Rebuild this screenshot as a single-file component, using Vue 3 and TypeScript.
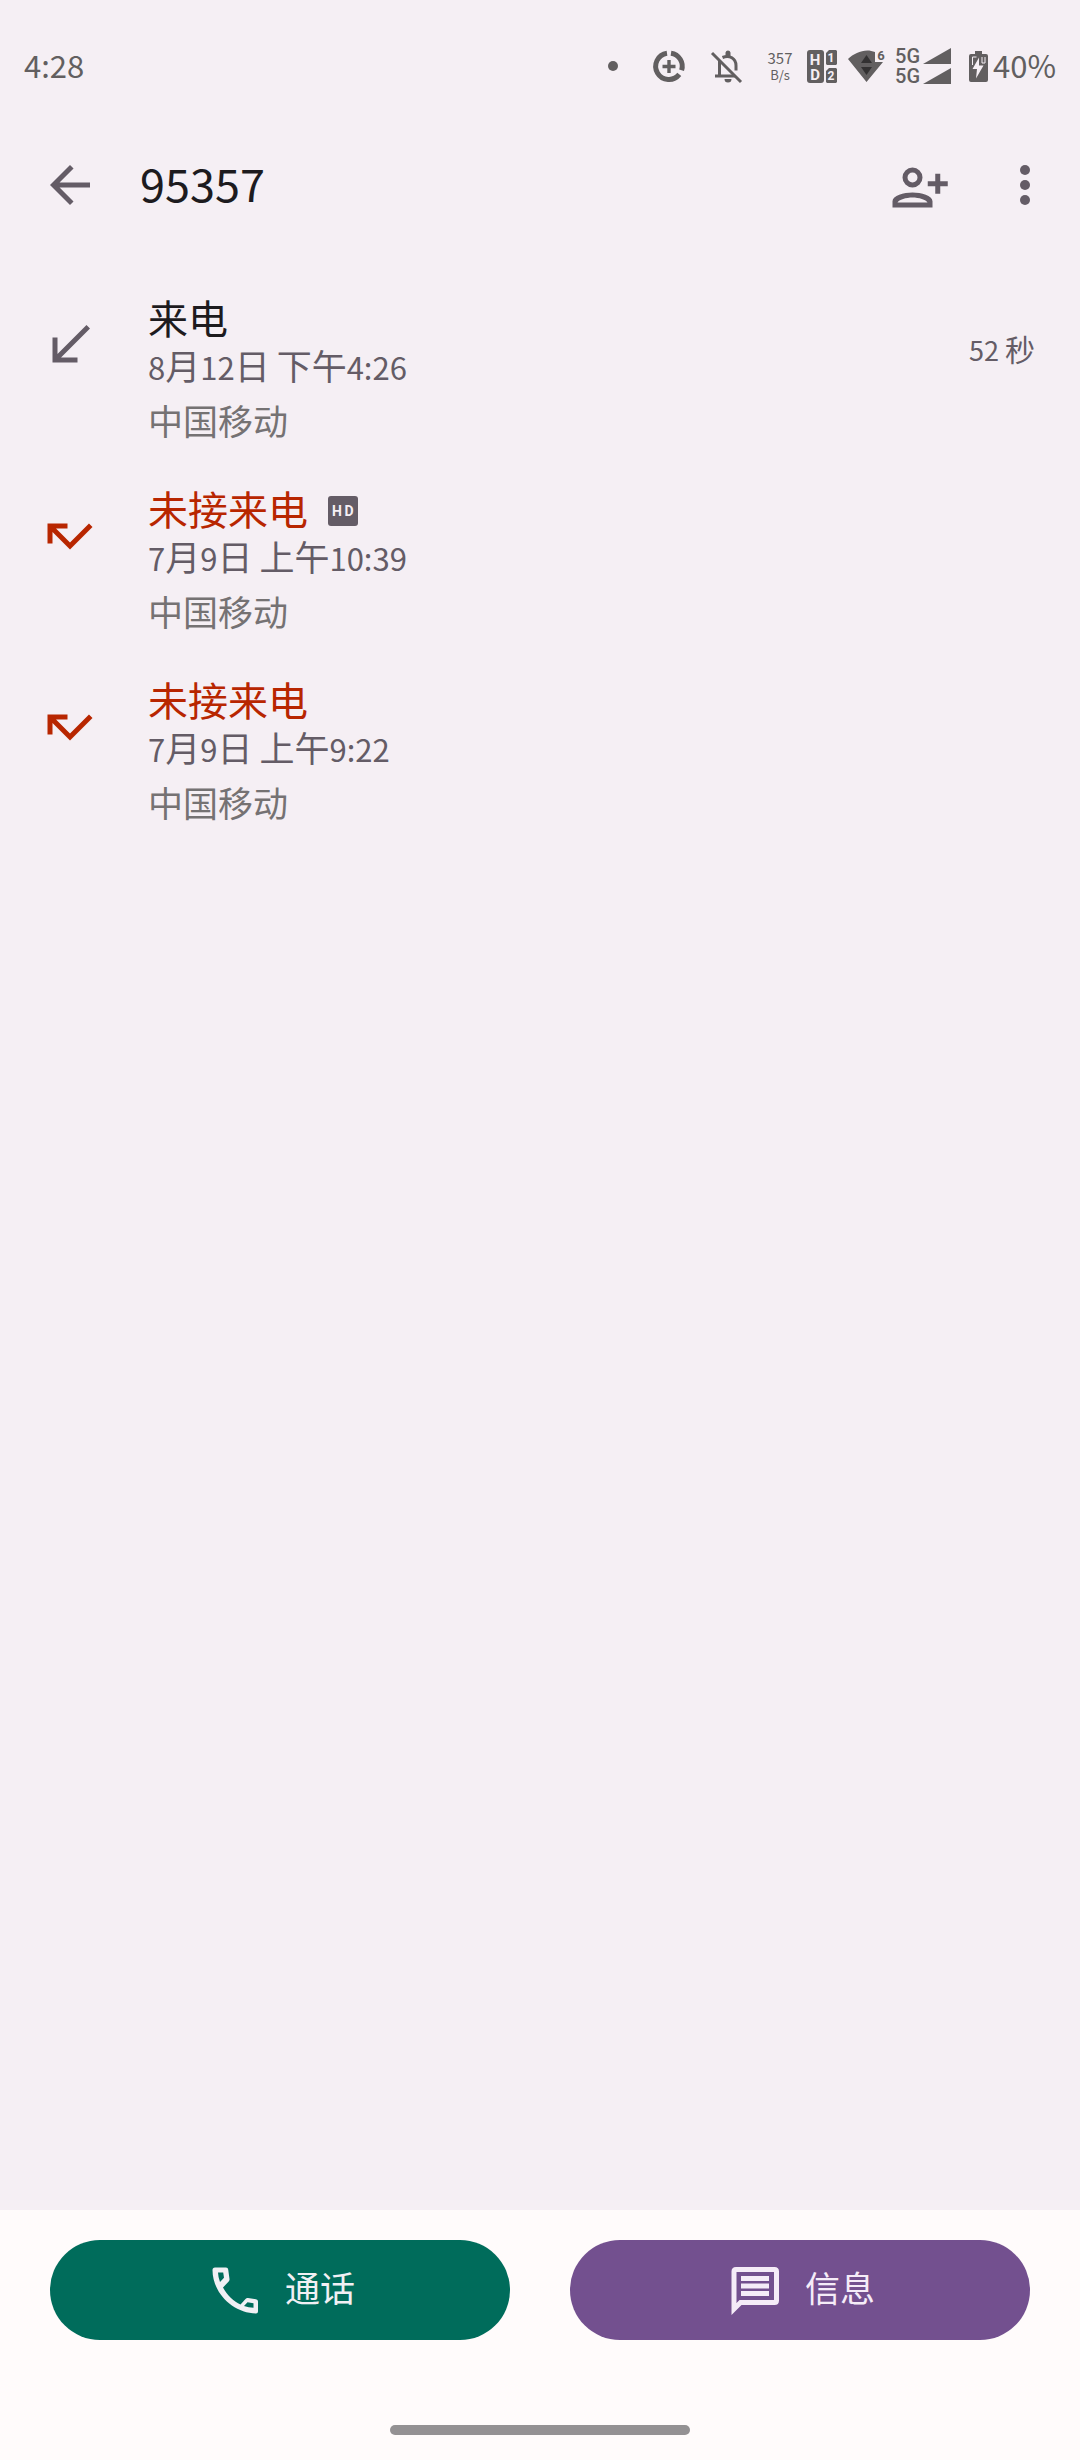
<script setup lang="ts">
interface CallEntry {
  id: number
  kind: 'incoming' | 'missed'
  label: string
  hd: boolean
  date: string
  carrier: string
  duration: string
}

interface Run {
  text: string
  latin: boolean
}

const contact = '95357'

const calls: CallEntry[] = [
  { id: 1, kind: 'incoming', label: '来电', hd: false, date: '8月12日 下午4:26', carrier: '中国移动', duration: '52 秒' },
  { id: 2, kind: 'missed', label: '未接来电', hd: true, date: '7月9日 上午10:39', carrier: '中国移动', duration: '' },
  { id: 3, kind: 'missed', label: '未接来电', hd: false, date: '7月9日 上午9:22', carrier: '中国移动', duration: '' },
]

// Digits are set slightly smaller than the Han characters around them.
function runs(text: string): Run[] {
  return (text.match(/[\x20-\x7e]+|[^\x20-\x7e]+/g) ?? []).map((part) => ({
    text: part,
    latin: /^[\x20-\x7e]/.test(part),
  }))
}
</script>

<template>
  <div class="screen">
    <div class="status">
      <span class="clock">4:28</span>
      <div class="notices">
        <svg width="36" height="36" viewBox="0 0 36 36"><circle cx="18" cy="18" r="5" fill="currentColor" /></svg>
        <svg width="36" height="36" viewBox="0 0 36 36" fill="none" stroke="currentColor">
          <path d="M20 5.2A13.2 13.2 0 0 1 30.6 22.3M28.3 26.4A13.2 13.2 0 1 1 16 5.2" stroke-width="5" />
          <path d="M18 12v13M11.5 18.5h13" stroke-width="3.4" />
        </svg>
        <svg width="36" height="36" viewBox="0 0 36 36" fill="none" stroke="currentColor" stroke-width="3">
          <path d="M5 5l29 29" />
          <path d="M12.5 13v15M8 28h20M15.5 9.5c7-3 13.5 1 13.5 8v5" />
          <path d="M18.5 4.5a2.6 2.6 0 0 1 5 0v4h-5zM17.5 31h7a3.5 3.5 0 0 1-7 0z" fill="currentColor" stroke="none" />
        </svg>
      </div>
      <div class="speed"><span>357</span><small>B/s</small></div>
      <div class="system">
        <svg width="30" height="36" viewBox="0 0 30 36">
          <rect x="0" y="2" width="17" height="33" rx="3" fill="currentColor" />
          <path d="M22 2h7l1 1v13l-1 1H20l-1-1V5zM22 20h7l1 1v13l-1 1H20l-1-1V23z" fill="currentColor" />
          <g class="glyph" fill="#f5eff4" text-anchor="middle">
            <text x="8" y="17" font-size="15">H</text><text x="8" y="32" font-size="15">D</text>
            <text x="24" y="14" font-size="12">1</text><text x="24" y="32" font-size="12">2</text>
          </g>
        </svg>
        <svg width="38" height="36" viewBox="0 0 38 36">
          <path d="M1 11C8 4 19 0 28 4v10h8L19.5 34z" fill="currentColor" />
          <path d="M14 15l5.5-8 5.5 8zM14 19h11l-5.5 8z" fill="#333132" />
          <text class="glyph" x="34" y="12" text-anchor="middle" font-size="13" fill="currentColor">6</text>
        </svg>
        <div class="sims">
          <div v-for="sim in 2" :key="sim" class="sim">
            <span>5G</span>
            <svg width="30" height="16" viewBox="0 0 30 16"><path d="M1 16L29 0v16z" fill="currentColor" /></svg>
          </div>
        </div>
        <div class="battery">
          <svg width="28" height="36" viewBox="0 0 28 36">
            <path d="M13 3h7v3h4a2 2 0 0 1 2 2v24a2 2 0 0 1-2 2H9a2 2 0 0 1-2-2V8a2 2 0 0 1 2-2h4z" fill="currentColor" />
            <path d="M17 9.500l-6.500 11.500h4.500l-1 9.500 7.500-13h-4.500z" fill="#f5eff4" />
            <path d="M10.500 17V9h4M20 9v6h3V9" fill="none" stroke="#f5eff4" stroke-width="1" />
          </svg>
          <span>40%</span>
        </div>
      </div>
    </div>

    <header class="bar">
      <button class="icon-button" type="button" aria-label="返回">
        <svg class="icon" viewBox="0 0 24 24"><path d="M20 11H7.830l5.590-5.590L12 4l-8 8 8 8 1.410-1.410L7.830 13H20z" /></svg>
      </button>
      <h1>{{ contact }}</h1>
      <div class="tools">
        <button class="icon-button" type="button" aria-label="添加联系人">
          <svg class="icon" viewBox="0 0 24 24">
            <path fill-rule="evenodd" d="M9 5a4 4 0 1 1 0 8 4 4 0 0 1 0-8zm0 2a2 2 0 1 0 0 4 2 2 0 0 0 0-4zM1 21v-2.500C1 16.200 5.500 15 9 15s8 1.200 8 3.500V21zm2-2h12c-.5-1.100-3.500-2-6-2s-5.500.9-6 2z" />
            <path d="M18.100 7.500h2v3h3v2h-3v3h-2v-3h-3v-2h3z" />
          </svg>
        </button>
        <button class="icon-button" type="button" aria-label="更多选项">
          <svg class="icon" viewBox="0 0 24 24"><circle cx="12" cy="6" r="2" /><circle cx="12" cy="12" r="2" /><circle cx="12" cy="18" r="2" /></svg>
        </button>
      </div>
    </header>

    <main>
      <ul class="calls">
        <li v-for="call in calls" :key="call.id" class="call" :class="call.kind">
          <svg class="icon" viewBox="0 0 24 24">
            <path v-if="call.kind === 'incoming'" d="M20 5.410L18.590 4 7 15.590V9H5v10h10v-2H8.410z" />
            <path v-else d="M19.590 7L12 14.590 6.410 9H11V7H3v8h2v-4.590l7 7 9-9z" />
          </svg>
          <div class="details">
            <div class="label">
              <span>{{ call.label }}</span>
              <svg v-if="call.hd" class="hd" viewBox="0 0 30 30">
                <rect width="30" height="30" rx="3" fill="#645c66" />
                <g class="glyph" text-anchor="middle" font-size="14" fill="#f5eff4">
                  <text x="9" y="20">H</text><text x="21" y="20">D</text>
                </g>
              </svg>
            </div>
            <div class="date"><span v-for="(run, i) in runs(call.date)" :key="i" :class="{ latin: run.latin }">{{ run.text }}</span></div>
            <div class="carrier">{{ call.carrier }}</div>
          </div>
          <div v-if="call.duration" class="duration"><span v-for="(run, i) in runs(call.duration)" :key="i" :class="{ latin: run.latin }">{{ run.text }}</span></div>
        </li>
      </ul>
    </main>

    <footer>
      <div class="actions">
        <button class="action dial" type="button">
          <svg class="icon" viewBox="0 0 60 60">
            <path fill-rule="evenodd" d="M10 7.500h11q2 0 2.200 2l1.300 9.500q.2 1.500-.8 2.500l-5.700 6c4.500 8.500 11 14 17.500 17l5-5.500q1-1.200 2.500-1l8 1.300q2 .2 2 2.200v10q0 2-2 2C28 53 7.500 33 7.500 10q0-2.500 2.500-2.500zM13 12.500q.2 5 2 9.500l4-4.300-.8-5.200zM39 46q4.500 1.500 9.500 1.700v-4.400l-6-1z" />
          </svg>
          <span>通话</span>
        </button>
        <button class="action message" type="button">
          <svg class="icon" viewBox="0 0 60 60">
            <path fill-rule="evenodd" d="M11 7h38.500q4.500 0 4.500 4.500v29q0 4.500-4.500 4.500h-33l-10 10V11.500Q6.500 7 11 7zm.5 5v31l3-3H49V12z" />
            <path d="M16 16h28v5H16zM16 23.500h28v5H16zM16 31h28v5H16z" />
          </svg>
          <span>信息</span>
        </button>
      </div>
      <div class="handle"></div>
    </footer>
  </div>
</template>

<style>
body {
  background: #f5eff4;
}
</style>

<style scoped>
.screen {
  display: flex;
  flex-direction: column;
  min-height: 100vh;
  background: #f5eff4;
  color: #645c66;
  font-family: "Liberation Sans", "Noto Sans CJK SC", sans-serif;
  font-size: 35px;
}
svg {
  display: block;
  flex: none;
}
.glyph {
  font-family: Roboto, sans-serif;
  font-weight: 700;
}
.status {
  display: flex;
  align-items: center;
  height: 132px;
  padding: 0 24px;
  color: #625f60;
  font-family: "Noto Sans CJK SC", sans-serif;
  font-size: 31px;
}
.clock {
  flex: 1;
}
.clock,
.battery span {
  padding-bottom: 3px;
}
.notices {
  display: flex;
  gap: 20px;
}
.speed {
  display: flex;
  flex-direction: column;
  align-items: center;
  width: 34px;
  margin: 0 10px 0 20px;
  font-size: 15px;
  line-height: 18px;
}
.speed small {
  font-size: 13px;
  line-height: 16px;
}
.system {
  display: flex;
  align-items: center;
  gap: 10px;
}
.sims {
  display: flex;
  flex-direction: column;
  gap: 4px;
}
.sim {
  display: flex;
  align-items: center;
  gap: 2px;
  font-family: Roboto, sans-serif;
  font-weight: 500;
  font-size: 20px;
  line-height: 16px;
}
.battery {
  display: flex;
  align-items: center;
  gap: 3px;
}
.bar {
  display: flex;
  align-items: center;
  gap: 40px;
  height: 106px;
  padding: 0 25px 0 40px;
}
h1 {
  flex: 1;
  margin: 0;
  padding-bottom: 4px;
  color: #1d1b1e;
  font-family: "Noto Sans CJK SC", sans-serif;
  font-size: 45px;
  font-weight: 400;
  line-height: 60px;
}
.tools {
  display: flex;
  gap: 45px;
}
button {
  border: 0;
  padding: 0;
  font: inherit;
  cursor: pointer;
}
.icon-button {
  background: none;
  color: #645c66;
}
.icon {
  width: 60px;
  height: 60px;
  fill: currentColor;
}
main {
  flex: 1;
}
.calls {
  margin: 0;
  padding: 38px 0 0;
  list-style: none;
}
.call {
  display: flex;
  align-items: flex-start;
  gap: 48px;
  padding: 20px 45px 15px 40px;
}
.call > .icon {
  margin-top: 19px;
}
.details {
  flex: 1;
}
.label {
  display: flex;
  align-items: center;
  gap: 20px;
  color: #1d1b1e;
  font-size: 40px;
  line-height: 48px;
}
.missed > .icon,
.missed .label {
  color: #b82600;
}
.hd {
  width: 30px;
  height: 30px;
}
.date {
  line-height: 48px;
  white-space: pre;
}
.latin {
  font-family: "Noto Sans CJK SC", sans-serif;
  font-size: 31px;
  line-height: 1;
}
.carrier {
  color: #757273;
  line-height: 62px;
  margin-bottom: -2px;
}
.duration {
  margin-top: 31px;
  font-size: 30px;
  line-height: 48px;
  white-space: pre;
}
.duration .latin {
  font-size: 27px;
}
footer {
  padding: 30px 50px 25px;
  background: #fffbfb;
}
.actions {
  display: flex;
  gap: 60px;
}
.action {
  display: flex;
  flex: 1;
  align-items: center;
  justify-content: center;
  gap: 20px;
  height: 100px;
  border-radius: 50px;
  line-height: 60px;
}
.dial {
  background: #006c5b;
  color: #f1f0f4;
}
.message {
  background: #73508f;
  color: #f5ecf8;
}
.handle {
  width: 300px;
  height: 10px;
  margin: 85px auto 0;
  border-radius: 5px;
  background: #949193;
}
</style>
